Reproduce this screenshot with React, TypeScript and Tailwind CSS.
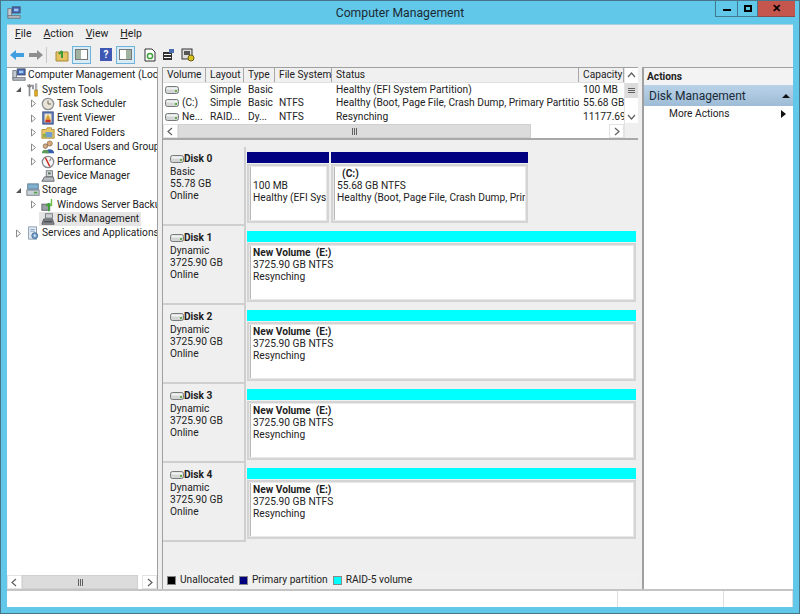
import type { ReactNode } from 'react';

const font = { fontFamily: 'Roboto, sans-serif' };

function Svg({ children, size = 14, className = '' }: { children: ReactNode; size?: number; className?: string }) {
  return (
    <svg width={size} height={size} viewBox="0 0 16 16" className={`shrink-0 ${className}`}>
      {children}
    </svg>
  );
}

const ComputerIcon = () => (
  <Svg>
    <rect x="6" y="1" width="9" height="7" fill="#3f62b5" stroke="#44506a" />
    <rect x="8" y="3" width="5" height="3" fill="#9cc4ee" />
    <rect x="1" y="3" width="4" height="9" fill="#c9ced6" stroke="#6a7280" />
    <rect x="1" y="11" width="14" height="3" fill="#b3b8c0" stroke="#6f747c" />
  </Svg>
);
const ToolsIcon = () => (
  <Svg>
    <path d="M4 1v14M8 2v5" stroke="#8a8f96" strokeWidth="2" fill="none" />
    <path d="M2 2c0 3 4 3 4 0" stroke="#777" strokeWidth="1.4" fill="none" />
    <rect x="10" y="8" width="3" height="7" fill="#e0a91e" stroke="#9a7310" strokeWidth="0.6" />
    <rect x="10.5" y="1" width="2" height="7" fill="#c6c9cc" stroke="#777" strokeWidth="0.5" />
  </Svg>
);
const ClockIcon = () => (
  <Svg>
    <circle cx="8" cy="8" r="6.5" fill="#e9e4d4" stroke="#8b8f96" strokeWidth="1.5" />
    <path d="M8 4v4h3.5" stroke="#5a5a5a" fill="none" />
  </Svg>
);
const EventIcon = () => (
  <Svg>
    <rect x="2" y="1" width="12" height="14" fill="#5a78b8" stroke="#3e5486" />
    <rect x="4" y="3" width="8" height="10" fill="#eee2c0" />
    <path d="M8 4l3 6H5z" fill="#d9a022" />
    <rect x="5" y="10" width="6" height="3" fill="#c8352c" />
  </Svg>
);
const FolderIcon = () => (
  <Svg>
    <path d="M1 4h5l1-2h5v2h3v10H1z" fill="#e7c766" stroke="#b08f35" />
    <rect x="5" y="7" width="8" height="6" fill="#6f9fd0" />
    <rect x="2" y="9" width="4" height="4" fill="#8db04c" />
  </Svg>
);
const UsersIcon = () => (
  <Svg>
    <circle cx="10" cy="4" r="3" fill="#d8a878" stroke="#6d5438" strokeWidth="0.6" />
    <path d="M5 15c0-6 10-6 10 0z" fill="#345ea8" />
    <circle cx="5" cy="7" r="2.6" fill="#d3ad85" stroke="#5b4630" strokeWidth="0.6" />
    <path d="M1 15c0-5 8-5 8 0z" fill="#5f9c58" />
  </Svg>
);
const PerfIcon = () => (
  <Svg>
    <circle cx="8" cy="8" r="6.5" fill="#f6f6f6" stroke="#85898f" strokeWidth="1.5" />
    <path d="M5 3l5 10" stroke="#cc2a1e" strokeWidth="1.6" />
    <path d="M11 4l-1 3" stroke="#555" />
  </Svg>
);
const DeviceIcon = () => (
  <Svg>
    <rect x="6" y="2" width="7" height="7" fill="#d2d5d9" stroke="#6f7378" />
    <path d="M1 14l3-5h10l1 5z" fill="#b6babf" stroke="#5e6267" />
    <rect x="8" y="4" width="3" height="2" fill="#4d6d4d" />
  </Svg>
);
const StorageIcon = () => (
  <Svg>
    <rect x="2" y="1" width="12" height="6" fill="#7fb0cf" stroke="#54738a" />
    <rect x="1" y="8" width="14" height="6" fill="#c9d2d8" stroke="#6c7880" />
    <rect x="9" y="10" width="4" height="2" fill="#56a34c" />
  </Svg>
);
const BackupIcon = () => (
  <Svg>
    <rect x="1" y="7" width="9" height="7" fill="#9aa0a6" stroke="#5d6268" />
    <path d="M9 15V6M9 6L6 9M9 6l3 3" stroke="#3fa03a" strokeWidth="2" fill="none" />
    <path d="M12 1v8M12 9l-2-2" stroke="#6bc04a" strokeWidth="1.6" fill="none" />
  </Svg>
);
const DiskMgmtIcon = () => (
  <Svg>
    <rect x="5" y="2" width="8" height="5" fill="#cfd2d5" stroke="#6c7075" />
    <path d="M1 14l2-6h10l2 6z" fill="#8e9297" stroke="#53575c" />
    <rect x="3" y="10" width="10" height="2" fill="#4c5055" />
  </Svg>
);
const ServicesIcon = () => (
  <Svg>
    <rect x="3" y="1" width="9" height="14" fill="#e4ebf2" stroke="#8296aa" />
    <path d="M5 4h5M5 6h5" stroke="#7fa0c0" />
    <circle cx="10" cy="11" r="3.4" fill="#6f9fcf" stroke="#47698c" />
    <circle cx="10" cy="11" r="1.2" fill="#e4ebf2" />
  </Svg>
);

function DriveIcon({ className = '' }: { className?: string }) {
  return (
    <svg width="14" height="8" viewBox="0 0 14 8" className={`shrink-0 ${className}`}>
      <rect x="0.5" y="0.5" width="13" height="7" rx="2" fill="#d4d6d6" stroke="#777b7b" />
      <rect x="1.5" y="1.5" width="11" height="2" rx="1" fill="#f1f2f2" />
      <rect x="10" y="4" width="2" height="2" fill="#5fae4a" />
    </svg>
  );
}

function Expander({ open }: { open?: boolean }) {
  return (
    <svg width="7" height="9" viewBox="0 0 7 9" className="shrink-0">
      {open ? <path d="M6 2v5H1z" fill="#555" /> : <path d="M1.5 1l4 3.5-4 3.5z" fill="#fff" stroke="#8a8a8a" />}
    </svg>
  );
}

type Node = { label: string; icon: ReactNode; depth: number; open?: boolean; leaf?: boolean; selected?: boolean; noArrow?: boolean };

const tree: Node[] = [
  { label: 'Computer Management (Local', icon: <ComputerIcon />, depth: 0, noArrow: true },
  { label: 'System Tools', icon: <ToolsIcon />, depth: 1, open: true },
  { label: 'Task Scheduler', icon: <ClockIcon />, depth: 2 },
  { label: 'Event Viewer', icon: <EventIcon />, depth: 2 },
  { label: 'Shared Folders', icon: <FolderIcon />, depth: 2 },
  { label: 'Local Users and Groups', icon: <UsersIcon />, depth: 2 },
  { label: 'Performance', icon: <PerfIcon />, depth: 2 },
  { label: 'Device Manager', icon: <DeviceIcon />, depth: 2, leaf: true },
  { label: 'Storage', icon: <StorageIcon />, depth: 1, open: true },
  { label: 'Windows Server Backup', icon: <BackupIcon />, depth: 2 },
  { label: 'Disk Management', icon: <DiskMgmtIcon />, depth: 2, leaf: true, selected: true },
  { label: 'Services and Applications', icon: <ServicesIcon />, depth: 1 },
];

const depthPad: Record<number, string> = { 0: 'pl-[3px]', 1: 'pl-[8px]', 2: 'pl-[23px]' };

const columns = [
  { label: 'Volume', w: 'w-[43px]' },
  { label: 'Layout', w: 'w-[38px]' },
  { label: 'Type', w: 'w-[31px]' },
  { label: 'File System', w: 'w-[57px]' },
  { label: 'Status', w: 'w-[247px]' },
  { label: 'Capacity', w: 'w-[45px]' },
];

const rows = [
  ['', 'Simple', 'Basic', '', 'Healthy (EFI System Partition)', '100 MB'],
  ['(C:)', 'Simple', 'Basic', 'NTFS', 'Healthy (Boot, Page File, Crash Dump, Primary Partition)', '55.68 GB'],
  ['Ne...', 'RAID...', 'Dy...', 'NTFS', 'Resynching', '11177.69 .'],
];

function ScrollThumbLines({ vertical }: { vertical?: boolean }) {
  return (
    <div className={`flex gap-[1px] ${vertical ? 'flex-col' : ''}`}>
      {[0, 1, 2].map((i) => (
        <div key={i} className={`bg-[#606060] ${vertical ? 'w-[7px] h-[1px]' : 'w-[1px] h-[7px]'}`} />
      ))}
    </div>
  );
}

function Chevron({ dir }: { dir: 'left' | 'right' | 'up' | 'down' }) {
  const d = { left: 'M6 1L2 4.5 6 8', right: 'M3 1l4 3.5L3 8', up: 'M1 6l3.5-4L8 6', down: 'M1 3l3.5 4L8 3' }[dir];
  return (
    <svg width="9" height="9" viewBox="0 0 9 9">
      <path d={d} fill="none" stroke="#606060" strokeWidth="1.2" />
    </svg>
  );
}

function HScroll({ thumb }: { thumb: string }) {
  return (
    <div className="flex h-[14px] bg-white shrink-0">
      <div className="w-[15px] flex items-center justify-center border border-[#e3e3e3]">
        <Chevron dir="left" />
      </div>
      <div className={`${thumb} bg-[#dcdcdc] border border-[#d0d0d0] flex items-center justify-center`}>
        <ScrollThumbLines />
      </div>
      <div className="flex-1" />
      <div className="w-[15px] flex items-center justify-center border border-[#e3e3e3]">
        <Chevron dir="right" />
      </div>
    </div>
  );
}

function Partition({ w, bar, name, lines }: { w: string; bar: string; name: string; lines: string[] }) {
  return (
    <div className={`${w} flex flex-col pr-[2px] overflow-hidden`}>
      <div className={`h-[11px] shrink-0 ${bar}`} />
      <div className="mt-[1px] h-[59px] border-[2px] border-[#d4d4d4] bg-[#e8e8e8] p-[1px]">
        <div className="h-full bg-white border-l border-[#b8b8b8] pl-[2px] pt-[1px] leading-[12.2px] whitespace-nowrap overflow-hidden">
          <div className="font-bold">{name}</div>
          {lines.map((l) => (
            <div key={l}>{l}</div>
          ))}
        </div>
      </div>
    </div>
  );
}

function DiskRow({ name, kind, size, children }: { name: string; kind: string; size: string; children: ReactNode }) {
  return (
    <div className="flex h-[79px] shrink-0">
      <div className="w-[83px] shrink-0 pl-[7px] pt-[5px] bg-[#efefef] border-b-[2px] border-r-[2px] border-[#cfcfcf] leading-[12px]">
        <div className="flex items-center font-bold h-[13px]">
          <DriveIcon />
          <span>{name}</span>
        </div>
        <div className="mt-[1px]">{kind}</div>
        <div>{size}</div>
        <div>Online</div>
      </div>
      <div className="flex-1 min-w-0 pt-[5px] pl-[1px] flex">{children}</div>
    </div>
  );
}

export default function App() {
  return (
    <div
      className="w-[800px] h-[614px] bg-[#62c8ea] border border-[#4a7488] flex flex-col text-[10.2px] leading-[12px] text-[#222] overflow-hidden relative"
      style={font}
    >
      {/* title bar */}
      <div className="h-[23px] shrink-0 flex items-center relative">
        <div className="pl-[6px]">
          <ComputerIcon />
        </div>
        <div className="flex-1 text-center text-[12.2px] text-[#1c2a33] pr-[20px]">Computer Management</div>
        <div className="absolute right-[4px] top-[-1px] flex h-[17px]">
          <div className="w-[23px] border-x border-b border-[#3f7a90] flex items-center justify-center">
            <div className="w-[8px] h-[2px] bg-black mt-[3px]" />
          </div>
          <div className="w-[20px] border-r border-b border-[#3f7a90] flex items-center justify-center">
            <div className="w-[8px] h-[7px] border-[2px] border-black" />
          </div>
          <div className="w-[37px] bg-[#c4564e] border-b border-[#8a4a48] flex items-center justify-center font-bold text-[11px] text-black leading-none">
            ✕
          </div>
        </div>
      </div>

      {/* client */}
      <div className="flex-1 min-h-0 mx-[6px] flex flex-col bg-[#efefef] border-t border-[#a9cfe0]">
        <div className="h-[18px] shrink-0 flex items-center gap-[12px] pl-[8px] text-[10.5px]">
          <span><u>F</u>ile</span>
          <span><u>A</u>ction</span>
          <span><u>V</u>iew</span>
          <span><u>H</u>elp</span>
        </div>
        <div className="h-[23px] shrink-0 flex items-center pl-[3px]">
          <svg width="14" height="12" viewBox="0 0 14 12"><path d="M0 6l6-5v3h8v4H6v3z" fill="#3f9fe0" /></svg>
          <svg width="14" height="12" viewBox="0 0 14 12" className="ml-[5px]"><path d="M14 6L8 1v3H0v4h8v3z" fill="#8e8e8e" /></svg>
          <div className="w-[1px] h-[16px] bg-[#c8c8c8] ml-[3px] mr-[8px]" />
          <svg width="14" height="14" viewBox="0 0 14 14"><path d="M1 4h12v9H1z" fill="#e6c260" stroke="#a98b35" /><path d="M7 10V3M7 3L4 6" stroke="#3f9a3a" strokeWidth="2" fill="none" /></svg>
          <div className="ml-[3px] w-[19px] h-[18px] bg-[#d8ecf8] border border-[#6fb3d9] flex items-center justify-center">
            <div className="w-[13px] h-[11px] border border-[#777] bg-white flex"><div className="w-[5px] bg-[#9fb3a0]" /></div>
          </div>
          <div className="ml-[9px] w-[12px] h-[13px] bg-[#3e58b4] text-white text-[10px] font-bold flex items-center justify-center">?</div>
          <div className="ml-[4px] w-[19px] h-[18px] bg-[#d8ecf8] border border-[#6fb3d9] flex items-center justify-center">
            <div className="w-[13px] h-[11px] border border-[#777] bg-white flex justify-end"><div className="w-[5px] bg-[#9fb3a0]" /></div>
          </div>
          <svg width="12" height="14" viewBox="0 0 12 14" className="ml-[9px]"><path d="M1 1h7l3 3v9H1z" fill="#fff" stroke="#333" /><circle cx="6" cy="8" r="2.6" fill="none" stroke="#3fa03a" strokeWidth="1.5" /></svg>
          <svg width="13" height="13" viewBox="0 0 13 13" className="ml-[6px]"><rect x="1" y="4" width="9" height="8" fill="#333" /><rect x="2" y="6" width="7" height="1" fill="#fff" /><rect x="2" y="9" width="7" height="1" fill="#fff" /><rect x="7" y="1" width="5" height="4" fill="#4a6fb0" /></svg>
          <svg width="14" height="14" viewBox="0 0 14 14" className="ml-[6px]"><rect x="1" y="1" width="10" height="10" fill="#ddd" stroke="#333" /><rect x="3" y="3" width="6" height="4" fill="#555" /><circle cx="10" cy="10" r="3" fill="#d8c21c" stroke="#6a5f10" /></svg>
        </div>

        {/* panes */}
        <div className="flex-1 min-h-0 flex pt-[1px]">
          <div className="w-[151px] shrink-0 bg-white flex flex-col border-r border-t border-[#a0a0a0]">
            <div className="flex-1 min-h-0 overflow-hidden">
              {tree.map((n) => (
                <div key={n.label} className={`flex items-center h-[14.4px] whitespace-nowrap ${depthPad[n.depth]}`}>
                  {!n.noArrow && (
                    <div className="w-[9px] shrink-0 flex justify-start">{!n.leaf && <Expander open={n.open} />}</div>
                  )}
                  <div className={`flex items-center h-full pl-[2px] pr-[2px] ${n.selected ? 'bg-[#e5e5e5]' : ''}`}>
                    {n.icon}
                    <span className="ml-[2px]">{n.label}</span>
                  </div>
                </div>
              ))}
            </div>
            <HScroll thumb="w-[116px]" />
          </div>

          <div className="w-[4px] shrink-0" />

          {/* center */}
          <div className="w-[476px] shrink-0 flex flex-col border-l border-t border-[#a0a0a0]">
            <div className="h-[70px] shrink-0 flex bg-white">
              <div className="flex-1 min-w-0 flex flex-col">
                <div className="h-[15px] flex bg-[#f0f0f0] border-b border-[#e0e0e0] whitespace-nowrap">
                  {columns.map((c) => (
                    <div key={c.label} className={`${c.w} shrink-0 border-r border-[#a8a8a8] pl-[4px] leading-[14px]`}>
                      {c.label}
                    </div>
                  ))}
                </div>
                {rows.map((r, i) => (
                  <div key={i} className="h-[13.6px] flex items-center whitespace-nowrap">
                    {r.map((cell, j) => (
                      <div key={j} className={`${columns[j].w} shrink-0 pl-[4px] overflow-hidden`}>
                        {j === 0 ? (
                          <span className="flex items-center gap-[3px] -ml-[2px]">
                            <DriveIcon />
                            {cell}
                          </span>
                        ) : (
                          cell
                        )}
                      </div>
                    ))}
                  </div>
                ))}
                <div className="mt-auto">
                  <HScroll thumb="w-[353px]" />
                </div>
              </div>
              <div className="w-[14px] shrink-0 flex flex-col border-l border-[#e3e3e3]">
                <div className="h-[15px] flex items-center justify-center"><Chevron dir="up" /></div>
                <div className="h-[15px] bg-[#dcdcdc] flex items-center justify-center"><ScrollThumbLines vertical /></div>
                <div className="h-[12px]" />
                <div className="h-[13px] flex items-center justify-center"><Chevron dir="down" /></div>
                <div className="flex-1 bg-[#efefef]" />
              </div>
            </div>

            <div className="h-[5px] shrink-0 bg-[#efefef] border-t-[2px] border-[#a8a8a8]" />

            <div className="flex-1 min-h-0 bg-[#efefef] flex flex-col pt-[4px]">
              <DiskRow name="Disk 0" kind="Basic" size="55.78 GB">
                <Partition w="w-[84px]" bar="bg-[#000080]" name={'\u00a0'} lines={['100 MB', 'Healthy (EFI Syst']} />
                <Partition w="w-[199px]" bar="bg-[#000080]" name={'\u00a0\u00a0(C:)'} lines={['55.68 GB NTFS', 'Healthy (Boot, Page File, Crash Dump, Prima']} />
              </DiskRow>
              {['Disk 1', 'Disk 2', 'Disk 3', 'Disk 4'].map((d) => (
                <DiskRow key={d} name={d} kind="Dynamic" size="3725.90 GB">
                  <Partition w="w-[391px]" bar="bg-[#00ffff]" name={'New Volume\u00a0\u00a0(E:)'} lines={['3725.90 GB NTFS', 'Resynching']} />
                </DiskRow>
              ))}
              <div className="mt-auto h-[18px] shrink-0 bg-[#f0f0f0] flex items-center pl-[4px] whitespace-nowrap">
                <div className="w-[9px] h-[9px] bg-black border border-[#888] mr-[4px]" />
                <span className="mr-[5px]">Unallocated</span>
                <div className="w-[9px] h-[9px] bg-[#000080] border border-[#888] mr-[4px]" />
                <span className="mr-[5px]">Primary partition</span>
                <div className="w-[9px] h-[9px] bg-[#00ffff] border border-[#888] mr-[4px]" />
                <span>RAID-5 volume</span>
              </div>
            </div>
          </div>

          <div className="w-[4px] shrink-0" />

          {/* actions */}
          <div className="flex-1 min-w-0 bg-white flex flex-col border-l-[2px] border-t border-[#a0a0a0]">
            <div className="h-[17px] shrink-0 bg-[#f3f3f3] font-bold pl-[3px] flex items-center">Actions</div>
            <div className="h-[21px] shrink-0 bg-gradient-to-b from-[#b9d2e8] to-[#9ebcd6] flex items-center pl-[5px] pr-[3px] text-[12px] text-[#1a2a38]">
              <span className="flex-1">Disk Management</span>
              <svg width="8" height="5" viewBox="0 0 8 5"><path d="M0 5l4-4 4 4z" fill="#111" /></svg>
            </div>
            <div className="h-[16px] shrink-0 flex items-center pl-[25px] pr-[7px]">
              <span className="flex-1">More Actions</span>
              <svg width="5" height="8" viewBox="0 0 5 8"><path d="M0 0l5 4-5 4z" fill="#111" /></svg>
            </div>
          </div>
        </div>

        {/* status bar */}
        <div className="h-[18px] shrink-0 bg-white border-t-[2px] border-[#c4c4c4] flex justify-end">
          <div className="w-[106px] border-l border-[#ddd]" />
          <div className="w-[70px] border-l border-[#ddd] border-r" />
        </div>
      </div>
      <div className="h-[6px] shrink-0" />
    </div>
  );
}
